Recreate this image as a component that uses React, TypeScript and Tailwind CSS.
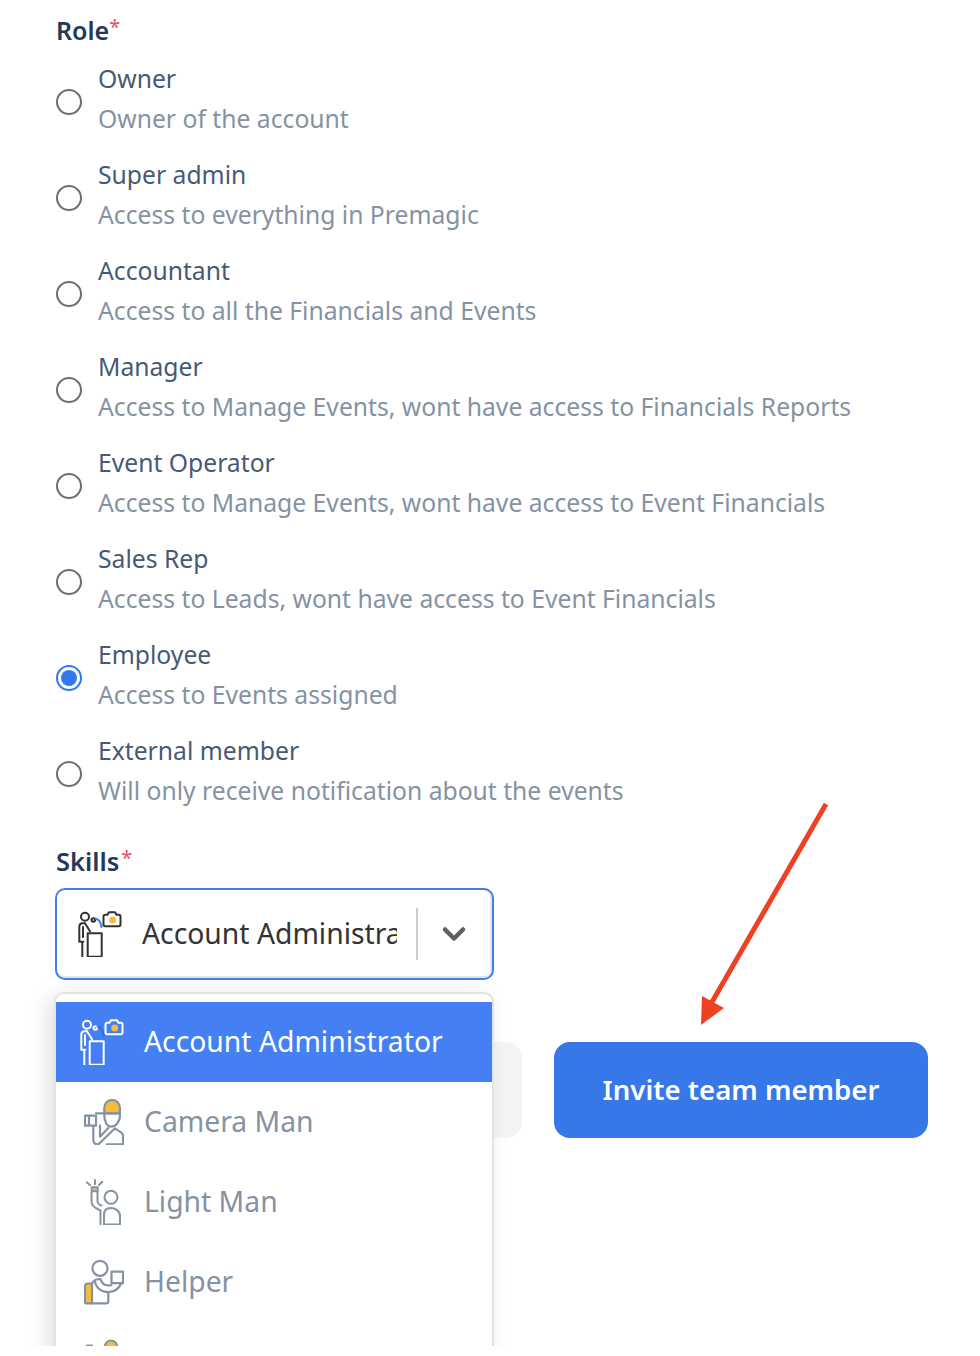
import React from 'react';
import { ChevronDown } from 'lucide-react';

const roles = [
  { name: 'Owner', info: 'Owner of the account' },
  { name: 'Super admin', info: 'Access to everything in Premagic' },
  { name: 'Accountant', info: 'Access to all the Financials and Events' },
  { name: 'Manager', info: 'Access to Manage Events, wont have access to Financials Reports' },
  { name: 'Event Operator', info: 'Access to Manage Events, wont have access to Event Financials' },
  { name: 'Sales Rep', info: 'Access to Leads, wont have access to Event Financials' },
  { name: 'Employee', info: 'Access to Events assigned', checked: true },
  { name: 'External member', info: 'Will only receive notification about the events' },
];

function PresenterIcon({ stroke, arc }: { stroke: string; arc: string }) {
  return (
    <svg width="44" height="46" viewBox="0 0 44 46" fill="none" stroke={stroke} strokeWidth="2" strokeLinecap="round" strokeLinejoin="round" className="shrink-0">
      <circle cx="7" cy="5.700" r="4" />
      <circle cx="15.300" cy="9" r="1.800" />
      <path d="M17.500 7.500c3.200.8 5.500 4 6 8.500" stroke={arc} />
      <path d="M9.700 22.300h14v23.400h-14z" />
      <path d="M7 12.300H4.500c-2 0-3.200 1.500-3.200 3.500v14.900h4M7 12.300l5 8M5 16v10M4.300 32v13.700" />
      <path d="M25.500 5.500c0-1 .7-1.700 1.700-1.700h2.300l1.500-2.600h6l1.500 2.600h2.300c1 0 1.700.7 1.700 1.700v8c0 1-.7 1.700-1.700 1.700H27.200c-1 0-1.700-.7-1.700-1.700z" />
      <circle cx="34.700" cy="9" r="3.500" fill="#f6bd3b" stroke="none" />
    </svg>
  );
}

function CameraManIcon() {
  return (
    <svg width="40" height="46" viewBox="0 0 40 46" fill="none" stroke="#8592a3" strokeWidth="2.200" strokeLinecap="round" strokeLinejoin="round" className="shrink-0">
      <path d="M20.300 14.300V8.800a7.800 7.800 0 0 1 15.600 0v5.500z" fill="#f6bd3b" />
      <path d="M12 14.300h24M20.300 16c0 7 3 11.700 6.700 11.700 4 0 9-4 9-11.700" />
      <path d="M1 16.700h11v10H1zM5 16.700v10" />
      <path d="M9.300 26.700V41c0 3.500 3 5.500 6 3.500L31 29.300l6 4c1.500 1 2 2 2 3.500v8.500H22.700" />
      <path d="M16 26.700v11l8.300-8.700" />
    </svg>
  );
}

function LightManIcon() {
  return (
    <svg width="40" height="46" viewBox="0 -1 40 46" fill="none" stroke="#8592a3" strokeWidth="2" strokeLinecap="round" strokeLinejoin="round" className="shrink-0">
      <path d="M2.700 2.300 6 5M11 0v4.300M18.300 1.700 15 5" />
      <rect x="7.700" y="7.200" width="6" height="4" fill="#f6bd3b" stroke="#8592a3" />
      <path d="M7.500 12v9c0 4 3 6.500 6 8l3 1.500v14M13.500 12v9c0 2 2 4 4 4.500" />
      <circle cx="27" cy="17.300" r="6.500" />
      <path d="M20 44v-9c0-5 3-7 7-7s9 3 9 8v8.500H20" />
    </svg>
  );
}

function HelperIcon() {
  return (
    <svg width="40" height="46" viewBox="0 0 40 46" fill="none" stroke="#8592a3" strokeWidth="2.200" strokeLinecap="round" strokeLinejoin="round" className="shrink-0">
      <circle cx="16" cy="9.300" r="7.500" />
      <rect x="27.500" y="12.700" width="11.500" height="11.500" />
      <path d="M8 24.500H4c-1.700 0-3 1.300-3 3V43c0 .8.700 1.400 1.500 1.400H8z" fill="#f6bd3b" />
      <path d="M8 24.500c1.500-3 4-4.500 8-4.500M8 44.400h14c1.500 0 2.300-1 2.300-2.400v-9" />
      <path d="M10.500 21.500c1.500 7 6.500 11.500 13.500 11.500 6.500 0 11-3.500 13-8.500" />
      <path d="M16.500 20c1 4 4 6.500 8 6.500 1 0 2-.2 3-.5" />
    </svg>
  );
}

function DomeIcon() {
  return (
    <svg width="40" height="46" viewBox="0 0 40 46" fill="none" stroke="#8592a3" strokeWidth="2" strokeLinecap="round" className="shrink-0">
      <path d="M21 13V7.500a6 6 0 0 1 12 0V13z" fill="#f6bd3b" />
      <path d="M3 6.500h5" />
    </svg>
  );
}

function Option({ icon, label, active }: { icon: React.ReactNode; label?: string; active?: boolean }) {
  return (
    <div className={`flex h-20 items-center gap-[20px] pl-[24px] text-[28.300px] ${active ? 'bg-[#4480f3] text-white' : 'bg-white text-[#8592a3]'}`}>
      <div className="flex w-[44px] shrink-0 items-center justify-end">{icon}</div>
      {label && <span className="pb-[2px]">{label}</span>}
    </div>
  );
}

export default function App() {
  return (
    <div className="relative h-[1346px] w-[980px] overflow-hidden bg-white pl-[56px] pt-[10px] font-['Noto_Sans',sans-serif]">
      <div className="text-[25px] font-semibold leading-[40px] text-[#23395b]">
        Role<span className="align-[6px] text-[20px] font-normal leading-none text-[#e8506b]">*</span>
      </div>

      <div className="mt-[9px] flex flex-col gap-[16px]">
        {roles.map((role) => (
          <div key={role.name} className="flex items-center gap-[16px]">
            {role.checked ? (
              <span className="mt-[6px] flex h-[26px] w-[26px] items-center justify-center rounded-full border-2 border-[#3478f0]">
                <span className="h-[16px] w-[16px] rounded-full bg-[#3478f0]" />
              </span>
            ) : (
              <span className="mt-[6px] h-[26px] w-[26px] rounded-full border-2 border-[#6e6e6e]" />
            )}
            <div className="text-[24.700px] leading-[40px]">
              <div className="text-[#475a75]">{role.name}</div>
              <div className="text-[#8592a3]">{role.info}</div>
            </div>
          </div>
        ))}
      </div>

      <div className="mt-[30px] text-[25.500px] font-semibold leading-[40px] text-[#23395b]">
        Skills<span className="ml-[2px] align-[6px] text-[20px] font-normal leading-none text-[#e8506b]">*</span>
      </div>

      <div className="relative -ml-px mt-[7px] h-[92px] w-[439px]">
        <div className="flex h-full items-center rounded-[10px] border-2 border-[#3f80ee] pl-[21px] shadow-[inset_0_-2px_0_#e4e4e4,inset_-2px_0_0_#e4e4e4]">
          <PresenterIcon stroke="#333333" arc="#3b82f6" />
          <div className="ml-[20px] w-[255px] overflow-hidden whitespace-nowrap pb-[2px] text-[28.300px] text-[#333333]">Account Administrator</div>
          <span className="ml-[19px] h-[52px] w-[2px] bg-[#cccccc]" />
          <ChevronDown className="ml-[18px] h-[36px] w-[36px] text-[#5f5f5f]" strokeWidth={3} />
        </div>

        {/* open menu lies over the buttons below */}
        <div className="absolute -left-px top-[104px] z-10 w-[440px] rounded-[10px] border-2 border-[#e3e3e3] bg-white pt-[7px] shadow-[-6px_4px_20px_rgba(0,0,0,0.12)]">
          <div className="h-px" />
          <Option icon={<PresenterIcon stroke="#ffffff" arc="#2f6fd8" />} label="Account Administrator" active />
          <Option icon={<CameraManIcon />} label="Camera Man" />
          <Option icon={<LightManIcon />} label="Light Man" />
          <Option icon={<HelperIcon />} label="Helper" />
          <Option icon={<DomeIcon />} />
        </div>
      </div>

      <div className="mt-[62px] flex gap-[32px]">
        <div className="h-[96px] w-[466px] rounded-[16px] bg-[#f3f4f6]" />
        <div className="flex h-[96px] w-[374px] items-center justify-center rounded-[16px] bg-[#3778e8] text-[27.600px] font-semibold text-white">
          Invite team member
        </div>
      </div>

      {/* annotation arrow drawn over the page */}
      <svg className="absolute left-[680px] top-[790px] z-20" width="160" height="250" viewBox="0 0 160 250" fill="none">
        <path d="M146 14 32 212" stroke="#ee4023" strokeWidth="5" />
        <path d="M21 235 22 206 44 218z" fill="#ee4023" />
      </svg>
    </div>
  );
}
